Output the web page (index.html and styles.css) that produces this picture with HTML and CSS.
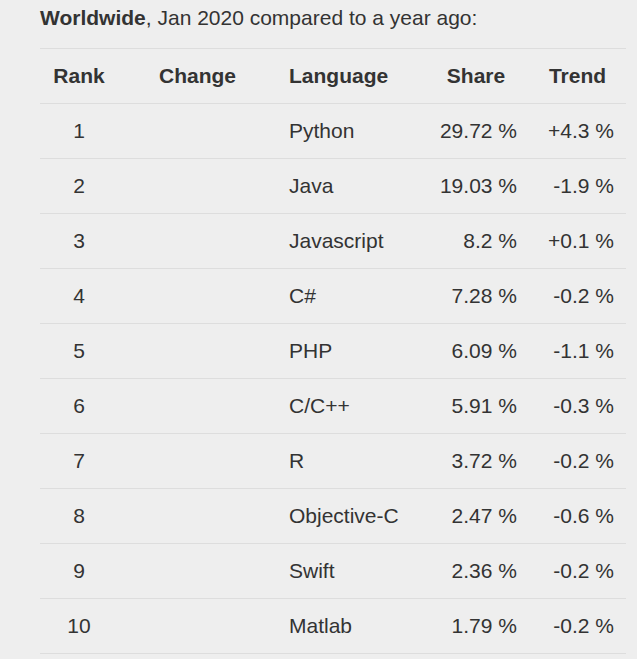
FILE: index.html
```html
<!DOCTYPE html>
<html lang="en">
<head>
<meta charset="utf-8">
<title>PYPL ranking</title>
<link rel="stylesheet" href="styles.css">
</head>
<body>
<div class="page">
  <p class="title"><b>Worldwide</b>, Jan 2020 compared to a year ago:</p>
  <table class="rank-table">
    <colgroup>
      <col class="c-rank">
      <col class="c-change">
      <col class="c-lang">
      <col class="c-share">
      <col class="c-trend">
    </colgroup>
    <thead>
      <tr>
        <th>Rank</th>
        <th>Change</th>
        <th class="left">Language</th>
        <th>Share</th>
        <th>Trend</th>
      </tr>
    </thead>
    <tbody>
      <tr><td class="center">1</td><td></td><td>Python</td><td class="right">29.72 %</td><td class="right">+4.3 %</td></tr>
      <tr><td class="center">2</td><td></td><td>Java</td><td class="right">19.03 %</td><td class="right">-1.9 %</td></tr>
      <tr><td class="center">3</td><td></td><td>Javascript</td><td class="right">8.2 %</td><td class="right">+0.1 %</td></tr>
      <tr><td class="center">4</td><td></td><td>C#</td><td class="right">7.28 %</td><td class="right">-0.2 %</td></tr>
      <tr><td class="center">5</td><td></td><td>PHP</td><td class="right">6.09 %</td><td class="right">-1.1 %</td></tr>
      <tr><td class="center">6</td><td></td><td>C/C++</td><td class="right">5.91 %</td><td class="right">-0.3 %</td></tr>
      <tr><td class="center">7</td><td></td><td>R</td><td class="right">3.72 %</td><td class="right">-0.2 %</td></tr>
      <tr><td class="center">8</td><td></td><td>Objective-C</td><td class="right">2.47 %</td><td class="right">-0.6 %</td></tr>
      <tr><td class="center">9</td><td></td><td>Swift</td><td class="right">2.36 %</td><td class="right">-0.2 %</td></tr>
      <tr><td class="center">10</td><td></td><td>Matlab</td><td class="right">1.79 %</td><td class="right">-0.2 %</td></tr>
    </tbody>
  </table>
</div>
</body>
</html>
```

FILE: styles.css
```css
html, body {
  margin: 0;
  padding: 0;
  background: #eeeeee;
}

body {
  font-family: "Liberation Sans", Arial, sans-serif;
  font-size: 21px;
  color: #333333;
}

.page {
  padding: 6px 0 0 40px;
}

.title {
  margin: 0 0 18px 0;
  line-height: 24px;
}

.rank-table {
  width: 586px;
  table-layout: fixed;
  border-collapse: separate;
  border-spacing: 0;
}

.c-rank { width: 78px; }
.c-change { width: 159px; }
.c-lang { width: 146px; }
.c-share { width: 106px; }
.c-trend { width: 97px; }

.rank-table th,
.rank-table td {
  padding: 0 12px;
  line-height: 54px;
  border-top: 1px solid #dddddd;
  vertical-align: middle;
  white-space: nowrap;
}

.rank-table tbody tr:last-child td {
  border-bottom: 1px solid #dddddd;
}

.rank-table th {
  font-weight: bold;
  text-align: center;
}

.rank-table th.left,
.rank-table td {
  text-align: left;
}

.rank-table td.center { text-align: center; }
.rank-table td.right { text-align: right; }
```
